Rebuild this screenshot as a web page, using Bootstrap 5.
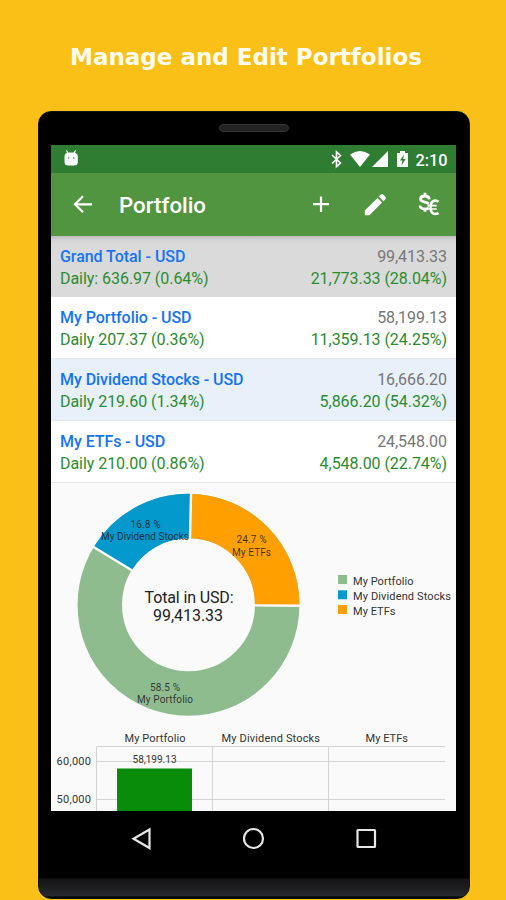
<!DOCTYPE html>
<html lang="en">
<head>
<meta charset="utf-8">
<meta name="viewport" content="width=device-width, initial-scale=1">
<title>Portfolio</title>
<link href="https://cdn.jsdelivr.net/npm/bootstrap@5.3.0/dist/css/bootstrap.min.css" rel="stylesheet">
<style>
  body { background: #fac018; font-family: Roboto, "Liberation Sans", sans-serif; width: 506px; height: 900px; overflow: hidden; }
  .headline { font: bold 23px/28px "DejaVu Sans", sans-serif; height: 111px; padding: 43px 14px 0 0; color: #fffdf0; white-space: nowrap; }
  .phone { width: 432px; height: 788px; margin-left: 38px; border-radius: 13px; border: 1px solid #101318; padding: 0 13px 0 12px;
    background: linear-gradient(#000 766px, #151515 767px, #1c1c1e 775px, #282a30 784px, #000 785px); }
  .earpiece { height: 33px; padding-top: 12px; }
  .earpiece span { width: 70px; height: 8px; border-radius: 4px; background: #222; border: 1px solid #343434; }
  .display { height: 666px; background: #fafafa; }
  .statusbar { height: 28px; background: #2e7d32; }
  .appbar { height: 63px; background: #529541; }
  .sum-row { height: 62px; padding: 10px 9px 0; font-size: 16px; letter-spacing: -.05px; line-height: 21.5px; background: #fff; color: #777; border-bottom: 1px solid #e6e9ec; white-space: nowrap; }
  .sum-row.grand { height: 61px; background: linear-gradient(#bcbcbc, #d3d3d3 4px, #dadada 9px); border: 0; }
  .sum-row.alt { background: #e8f0fa; }
  .acct { color: #1474f5; font-weight: 500; }
  .gain { color: #2a8c30; }
  .charts { height: 328px; }
  .softkeys { height: 55px; }
  svg { display: block; }
  svg text { font-family: Roboto, "Liberation Sans", sans-serif; }
</style>
<script src="https://cdn.jsdelivr.net/npm/bootstrap@5.3.0/dist/js/bootstrap.bundle.min.js"></script>
</head>
<body>
<h1 class="headline text-center m-0">Manage and Edit Portfolios</h1>
<main class="phone">
  <div class="earpiece d-flex justify-content-center"><span></span></div>
  <div class="display overflow-hidden">
    <div class="statusbar">
      <svg width="405" height="28" viewBox="51 145 405 28" fill="#fff">
        <path d="M64.5 156.5Q64.5 153.5 67 153L66 150.5l.8-.4L68.300 152.500H73.700L75.200 150.100l.8.4L75 153Q77.800 153.500 77.800 156.500V162Q77.800 165.500 74 165.500H68.300Q64.500 165.500 64.500 162Z"/>
        <g fill="#2e7d32"><circle cx="68.600" cy="158" r=".8"/><circle cx="73.800" cy="158" r=".8"/></g>
        <path d="M332 155l8.500 8-4 3.700V151.800l4 3.700-8.500 8" fill="none" stroke="#fff" stroke-width="1.600"/>
        <path d="M350 154.500Q360 147.500 370 154.500L360 167Z"/>
        <path d="M388 151V167H372Z"/>
        <path d="M397 153h3v-2h5v2h3v14H397Z"/>
        <path d="M404 154.500l-4 6h2.500l-1 5 4.200-6.500h-2.600Z" fill="#2e7d32"/>
        <text x="415.500" y="165.500" font-size="16" font-weight="500" textLength="32" lengthAdjust="spacingAndGlyphs">2:10</text>
      </svg>
    </div>
    <div class="appbar">
      <svg width="405" height="63" viewBox="51 173 405 63" fill="#fff">
        <path d="M92 204.300H75.500M83 196.300l-8 8 8 8" fill="none" stroke="#fff" stroke-width="2.200"/>
        <text x="119" y="213" font-size="22" font-weight="500" textLength="87" lengthAdjust="spacingAndGlyphs">Portfolio</text>
        <path d="M321 196.500v15.500M313 204.200h16" stroke="#fff" stroke-width="2.200"/>
        <path d="M364.800 210.600L377.500 197.900l4.600 4.600L369.400 215.200H364.800ZM378.800 196.600l2-2q1.200-1.200 2.400 0l2.200 2.200q1.200 1.200 0 2.400L383.400 201.200Z"/>
        <!-- currency exchange icon -->
        <g fill="none" stroke="#fff" stroke-width="2.800">
          <path d="M429.300 199.300Q429 196 425 196Q420.600 196 420.600 199Q420.600 201.300 425 202.200Q429.600 203.200 429.600 206Q429.600 209 425 209Q420.300 209 420 205.500M425 192.800v3.500M425 208.500v3.300"/>
          <path d="M438.500 201.800Q437 200.500 434.800 200.600Q430.600 201 430.600 207.300Q430.600 213.700 434.800 214Q437 214.100 438.500 212.900" stroke="#529541" stroke-width="4"/>
          <path d="M438.500 201.800Q437 200.500 434.800 200.600Q430.600 201 430.600 207.300Q430.600 213.700 434.800 214Q437 214.100 438.500 212.900" stroke-width="2.600"/>
          <path d="M427.500 205.700h9.200M427.500 209h9.200" stroke-width="1.700"/>
        </g>
      </svg>
    </div>
    <section>
      <div class="sum-row grand">
        <div class="d-flex justify-content-between"><span class="acct">Grand Total - USD</span><span>99,413.33</span></div>
        <div class="d-flex justify-content-between gain"><span>Daily: 636.97 (0.64%)</span><span>21,773.33 (28.04%)</span></div>
      </div>
      <div class="sum-row">
        <div class="d-flex justify-content-between"><span class="acct">My Portfolio - USD</span><span>58,199.13</span></div>
        <div class="d-flex justify-content-between gain"><span>Daily 207.37 (0.36%)</span><span>11,359.13 (24.25%)</span></div>
      </div>
      <div class="sum-row alt">
        <div class="d-flex justify-content-between"><span class="acct">My Dividend Stocks - USD</span><span>16,666.20</span></div>
        <div class="d-flex justify-content-between gain"><span>Daily 219.60 (1.34%)</span><span>5,866.20 (54.32%)</span></div>
      </div>
      <div class="sum-row">
        <div class="d-flex justify-content-between"><span class="acct">My ETFs - USD</span><span>24,548.00</span></div>
        <div class="d-flex justify-content-between gain"><span>Daily 210.00 (0.86%)</span><span>4,548.00 (22.74%)</span></div>
      </div>
    </section>
    <section class="charts">
      <svg width="405" height="328" viewBox="51 483 405 328" fill="#222">
        <g transform="translate(188.500 604.800)">
          <g fill="none" stroke-width="44.500" transform="rotate(-90)">
            <circle r="88.700" stroke="#8fbc8f" pathLength="360"/>
            <circle r="88.700" stroke="#ffa000" pathLength="360" stroke-dasharray="89.200 270.800" stroke-dashoffset="-1.300"/>
            <circle r="88.700" stroke="#0499cc" pathLength="360" stroke-dasharray="60 300" stroke-dashoffset="-301.300"/>
          </g>
          <g stroke="#fafafa" stroke-width="2.400">
            <path d="M0-65V-113" transform="rotate(1.300)"/>
            <path d="M0-65V-113" transform="rotate(90.500)"/>
            <path d="M0-65V-113" transform="rotate(301.300)"/>
          </g>
        </g>
        <g font-size="10" fill="#1b1b1b" fill-opacity=".85">
          <text x="130.500" y="527.500" textLength="30">16.8 %</text>
          <text x="101" y="540" textLength="88">My Dividend Stocks</text>
          <text x="236.500" y="543" textLength="30">24.7 %</text>
          <text x="232" y="555.500" textLength="39">My ETFs</text>
          <text x="150" y="690.500" textLength="30">58.5 %</text>
          <text x="137" y="703" textLength="56">My Portfolio</text>
        </g>
        <g font-size="16" fill="#222">
          <text x="144.500" y="603" textLength="89">Total in USD:</text>
          <text x="153" y="621" textLength="70">99,413.33</text>
        </g>
        <path fill="#8fbc8f" d="M338 575h9v9h-9Z"/>
        <path fill="#0499cc" d="M338 590.300h9v9h-9Z"/>
        <path fill="#ffa000" d="M338 605h9v9h-9Z"/>
        <g font-size="11" fill="#333">
          <text x="353" y="585" textLength="60.500">My Portfolio</text>
          <text x="353" y="600" textLength="98">My Dividend Stocks</text>
          <text x="353" y="615" textLength="42.500">My ETFs</text>
          <text x="124.500" y="741.500" textLength="61">My Portfolio</text>
          <text x="221.500" y="741.500" textLength="98.500">My Dividend Stocks</text>
          <text x="365.500" y="741.500" textLength="42.500">My ETFs</text>
          <text x="56.500" y="765" textLength="34.500">60,000</text>
          <text x="56.500" y="802.500" textLength="34.500">50,000</text>
        </g>
        <path d="M96.500 746.500H445M96.500 761.500H445M96.500 799.500H445M96.500 746.500V811M212.500 746.500V811M328.500 746.500V811" fill="none" stroke="#d3d3d3"/>
        <path fill="#088c0a" d="M117 768.500h75V811h-75Z"/>
        <text x="132.500" y="762.500" font-size="10" fill="#333" textLength="44">58,199.13</text>
      </svg>
    </section>
  </div>
  <div class="softkeys">
    <svg width="405" height="55" viewBox="51 811 405 55" fill="none" stroke="#e6e6e6" stroke-width="2.200">
      <path d="M149.500 829.500v18.500l-16-9.300Z"/>
      <circle cx="253.500" cy="838.500" r="9.500"/>
      <rect x="357.500" y="830" width="17.500" height="17" rx=".5"/>
    </svg>
  </div>
</main>
</body>
</html>
